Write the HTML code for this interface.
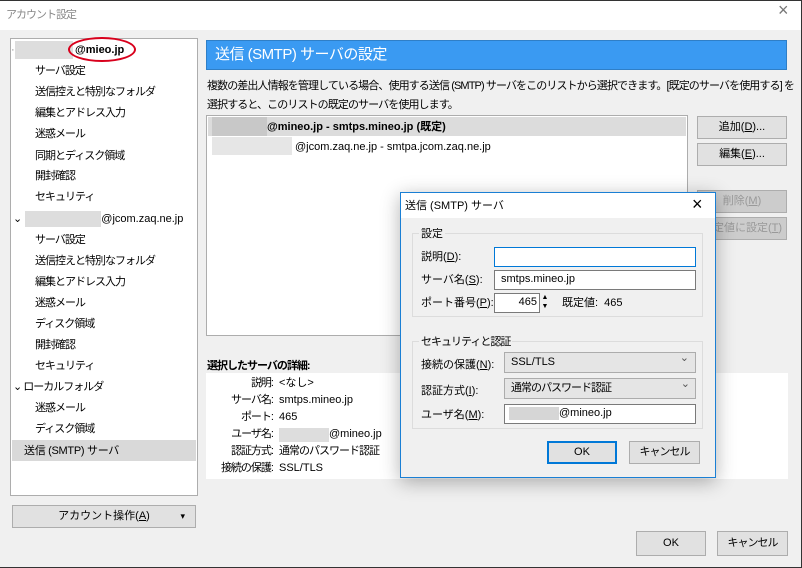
<!DOCTYPE html>
<html><head><meta charset="utf-8"><style>
*{box-sizing:border-box;margin:0;padding:0}
body{width:802px;height:568px;overflow:hidden;background:#f0f0f0;font-family:"Liberation Sans","Noto Sans CJK JP",sans-serif;font-size:11px;line-height:14px;color:#000;position:relative}
.a{position:absolute}
.j{letter-spacing:-1px}
.frame{left:0;top:0;width:802px;height:568px;border:1px solid #333;border-left:none}
.title{left:0;top:1px;width:801px;height:29px;background:#fff}
.tree{left:10px;top:38px;width:188px;height:458px;background:#fff;border:1px solid #adadad}
.ti{position:absolute;left:24px;white-space:nowrap;letter-spacing:-1px}
.blur{background:#d6d6d6;display:inline-block}
.btn{position:absolute;background:#e1e1e1;border:1px solid #adadad;text-align:center;line-height:20px;white-space:nowrap}
.inp{position:absolute;background:#fff;border:1px solid #7a7a7a;line-height:17px;padding-left:6px;white-space:nowrap}
.sel{position:absolute;background:#e5e5e5;border:1px solid #acacac;line-height:19px;padding-left:6px}
.sel:after{content:"⌄";position:absolute;right:6px;top:-4px;color:#555}
.lbl{position:absolute;white-space:nowrap;line-height:14px}
.r{position:absolute;white-space:nowrap;text-align:right;width:70px;left:203px;letter-spacing:-1px;line-height:14px}
.grp{position:absolute;border:1px solid #dcdcdc}
</style></head><body>
<div class="a title"></div>
<div class="a j" style="left:6px;top:8px;color:#888">アカウント設定</div>
<div class="a" style="left:778px;top:3px;color:#777;font-size:18px">×</div>

<div class="a tree">
 <div class="ti" style="left:0;top:4px;color:#888">·</div>
 <div class="ti" style="left:4px;top:2px;letter-spacing:0"><span class="blur" style="width:58px;height:18px;vertical-align:middle;background:#ddd"></span><b style="margin-left:2px">@mieo.jp</b></div>
 <div class="ti" style="top:25px">サーバ設定</div>
 <div class="ti" style="top:46px">送信控えと特別なフォルダ</div>
 <div class="ti" style="top:67px">編集とアドレス入力</div>
 <div class="ti" style="top:88px">迷惑メール</div>
 <div class="ti" style="top:110px">同期とディスク領域</div>
 <div class="ti" style="top:130px">開封確認</div>
 <div class="ti" style="top:151px">セキュリティ</div>
 <div class="ti" style="left:2px;top:172px;letter-spacing:0">⌄ <span class="blur" style="width:76px;height:16px;vertical-align:middle;background:#ddd"></span>@jcom.zaq.ne.jp</div>
 <div class="ti" style="top:194px">サーバ設定</div>
 <div class="ti" style="top:215px">送信控えと特別なフォルダ</div>
 <div class="ti" style="top:236px">編集とアドレス入力</div>
 <div class="ti" style="top:257px">迷惑メール</div>
 <div class="ti" style="top:278px">ディスク領域</div>
 <div class="ti" style="top:299px">開封確認</div>
 <div class="ti" style="top:320px">セキュリティ</div>
 <div class="ti" style="left:2px;top:341px">⌄ ローカルフォルダ</div>
 <div class="ti" style="top:362px">迷惑メール</div>
 <div class="ti" style="top:383px">ディスク領域</div>
 <div style="position:absolute;left:1px;top:401px;width:184px;height:21px;background:#d9d9d9"></div>
 <div class="ti" style="left:13px;top:405px;letter-spacing:-0.3px">送信 (SMTP) サーバ</div>
</div>
<div class="a" style="left:68px;top:37px;width:68px;height:25px;border:2px solid #d8001c;border-radius:50%"></div>
<div class="btn" style="left:12px;top:505px;width:184px;height:23px">アカウント操作(<u>A</u>)<span style="position:absolute;right:10px;font-size:9px">▾</span></div>

<div class="a" style="left:206px;top:40px;width:581px;height:30px;background:#3a9af2;border:1px solid #2f7fc7;color:#fff;font-size:15px;line-height:28px;padding-left:8px;letter-spacing:-0.5px">送信 (SMTP) サーバの設定</div>
<div class="a" style="left:207px;top:77px;line-height:19px;width:600px;white-space:nowrap;letter-spacing:-0.9px">複数の差出人情報を管理している場合、使用する送信 (SMTP) サーバをこのリストから選択できます。[既定のサーバを使用する] を<br>選択すると、このリストの既定のサーバを使用します。</div>

<div class="a" style="left:206px;top:115px;width:482px;height:221px;background:#fff;border:1px solid #adadad">
 <div style="position:absolute;left:1px;top:1px;width:478px;height:19px;background:#dcdcdc"></div>
 <div style="position:absolute;left:5px;top:1px;width:55px;height:19px;background:#c8c8c8"></div>
 <div style="position:absolute;left:60px;top:4px;font-weight:bold;white-space:nowrap">@mineo.jp - smtps.mineo.jp (既定)</div>
 <div style="position:absolute;left:5px;top:21px;width:80px;height:18px;background:#e6e6e6"></div>
 <div style="position:absolute;left:88px;top:24px;white-space:nowrap">@jcom.zaq.ne.jp - smtpa.jcom.zaq.ne.jp</div>
</div>
<div class="btn" style="left:697px;top:116px;width:90px;height:23px">追加(<u>D</u>)...</div>
<div class="btn" style="left:697px;top:143px;width:90px;height:23px">編集(<u>E</u>)...</div>
<div class="btn" style="left:697px;top:190px;width:90px;height:23px;color:#999;background:#ccc">削除(<u>M</u>)</div>
<div class="btn" style="left:697px;top:217px;width:90px;height:23px;color:#999;background:#ccc">既定値に設定(<u>T</u>)</div>

<div class="a j" style="left:207px;top:359px;font-weight:bold">選択したサーバの詳細:</div>
<div class="a" style="left:206px;top:373px;width:582px;height:106px;background:#fff"></div>
<div class="r" style="top:376px">説明:</div><div class="lbl" style="left:279px;top:376px">&lt;なし&gt;</div>
<div class="r" style="top:393px">サーバ名:</div><div class="lbl" style="left:279px;top:393px">smtps.mineo.jp</div>
<div class="r" style="top:410px">ポート:</div><div class="lbl" style="left:279px;top:410px">465</div>
<div class="r" style="top:427px">ユーザ名:</div><div class="a" style="left:279px;top:428px;width:50px;height:14px;background:#ddd"></div><div class="lbl" style="left:329px;top:427px">@mineo.jp</div>
<div class="r" style="top:444px">認証方式:</div><div class="lbl j" style="left:279px;top:444px">通常のパスワード認証</div>
<div class="r" style="top:461px">接続の保護:</div><div class="lbl" style="left:279px;top:461px">SSL/TLS</div>

<div class="btn" style="left:636px;top:531px;width:70px;height:25px;line-height:23px">OK</div>
<div class="btn j" style="left:717px;top:531px;width:71px;height:25px;line-height:23px">キャンセル</div>

<!-- dialog -->
<div class="a" style="left:400px;top:192px;width:316px;height:286px;background:#f0f0f0;border:1px solid #1a7fd4;box-shadow:0 4px 18px rgba(0,0,0,.3)">
 <div style="position:absolute;left:0;top:0;width:314px;height:25px;background:#fff"></div>
 <div class="lbl" style="left:4px;top:6px">送信 (SMTP) サーバ</div>
 <div class="lbl" style="left:291px;top:1px;font-size:18px;line-height:20px">×</div>
 <div class="grp" style="left:11px;top:40px;width:291px;height:84px"></div>
 <div class="lbl" style="left:18px;top:34px;background:#f0f0f0;padding:0 2px">設定</div>
 <div class="lbl" style="left:20px;top:57px">説明(<u>D</u>):</div>
 <div class="inp" style="left:93px;top:54px;width:202px;height:20px;border-color:#0078d7"></div>
 <div class="lbl" style="left:20px;top:80px">サーバ名(<u>S</u>):</div>
 <div class="inp" style="left:93px;top:77px;width:202px;height:20px">smtps.mineo.jp</div>
 <div class="lbl" style="left:20px;top:103px">ポート番号(<u>P</u>):</div>
 <div class="inp" style="left:93px;top:100px;width:46px;height:20px;text-align:right;padding-right:2px">465</div>
 <div style="position:absolute;left:139px;top:100px;width:10px;height:20px;font-size:7px;line-height:9px;text-align:center">▲<br>▼</div>
 <div class="lbl" style="left:161px;top:103px">既定値:&nbsp;&nbsp;465</div>
 <div class="grp" style="left:11px;top:148px;width:291px;height:88px"></div>
 <div class="lbl j" style="left:18px;top:142px;background:#f0f0f0;padding:0 2px">セキュリティと認証</div>
 <div class="lbl" style="left:20px;top:165px">接続の保護(<u>N</u>):</div>
 <div class="sel" style="left:103px;top:159px;width:192px;height:21px">SSL/TLS</div>
 <div class="lbl" style="left:20px;top:191px">認証方式(<u>I</u>):</div>
 <div class="sel j" style="left:103px;top:185px;width:192px;height:21px">通常のパスワード認証</div>
 <div class="lbl" style="left:20px;top:215px">ユーザ名(<u>M</u>):</div>
 <div class="inp" style="left:103px;top:211px;width:192px;height:20px;padding-left:4px"><span style="display:inline-block;width:50px;height:13px;background:#d6d6d6;vertical-align:middle"></span>@mineo.jp</div>
 <div class="btn" style="left:146px;top:248px;width:70px;height:23px;border:2px solid #0078d7;line-height:19px">OK</div>
 <div class="btn j" style="left:228px;top:248px;width:71px;height:23px">キャンセル</div>
</div>
<div class="a frame"></div>
</body></html>
